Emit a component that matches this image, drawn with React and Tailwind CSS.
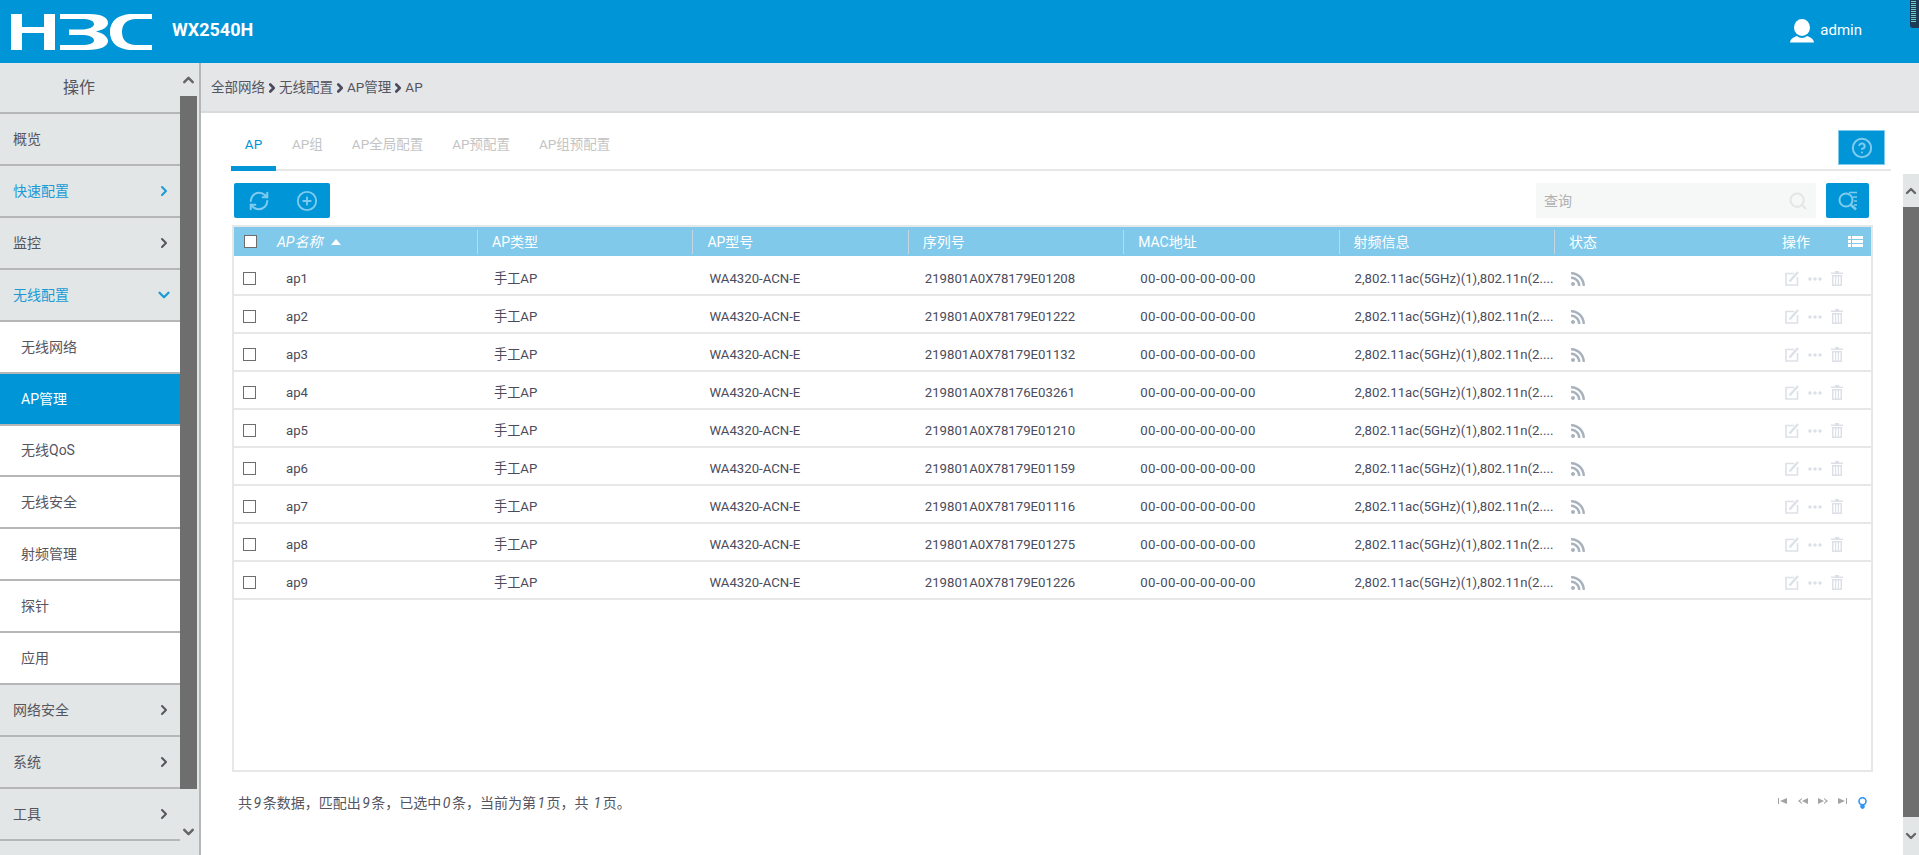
import React from "react";
import {
    ChevronRight,
    ChevronDown,
    ChevronUp,
    RefreshCw,
    CirclePlus,
    CircleHelp,
    Search,
} from "lucide-react";
import { FaRss } from "react-icons/fa";

const font = "font-['Roboto','Noto_Sans_CJK_SC',sans-serif]";

const menu = [
    { label: "概览" },
    { label: "快速配置", arrow: "right", active: true },
    { label: "监控", arrow: "right" },
    { label: "无线配置", arrow: "down", active: true },
    { label: "无线网络", sub: true },
    { label: "AP管理", sub: true, selected: true },
    { label: "无线QoS", sub: true },
    { label: "无线安全", sub: true },
    { label: "射频管理", sub: true },
    { label: "探针", sub: true },
    { label: "应用", sub: true },
    { label: "网络安全", arrow: "right" },
    { label: "系统", arrow: "right" },
    { label: "工具", arrow: "right" },
];

const rows = [
    ["ap1", "219801A0X78179E01208"],
    ["ap2", "219801A0X78179E01222"],
    ["ap3", "219801A0X78179E01132"],
    ["ap4", "219801A0X78176E03261"],
    ["ap5", "219801A0X78179E01210"],
    ["ap6", "219801A0X78179E01159"],
    ["ap7", "219801A0X78179E01116"],
    ["ap8", "219801A0X78179E01275"],
    ["ap9", "219801A0X78179E01226"],
];

const tabs = ["AP", "AP组", "AP全局配置", "AP预配置", "AP组预配置"];
const crumbs = ["全部网络", "无线配置", "AP管理", "AP"];
const columns = ["AP类型", "AP型号", "序列号", "MAC地址", "射频信息"];
const gridCols = "grid-cols-[243px_215.4px_215.4px_215.4px_215.4px_215.4px_1fr]";

function Logo() {
    return (
        <svg width="141" height="36" viewBox="0 0 141 36" fill="#fff">
            <path d="M0 0H11V13H33V0H44V36H33V19H11V36H0Z" />
            <path d="M49 0H78C92 0 97 4 97 9C97 13 92 16 85 17.5C92 19 97 23 97 27C97 32 90 36 76 36H49V31H70C79 31 83 29 83 26.5C83 23 78 21 70 21H58V15.5H70C78 15.5 83 13 83 10C83 7 79 5 70 5H49Z" />
            <path d="M141 0H122C106 0 99 8 99 18C99 28 106 36 122 36H141V31H125C116 31 111 26 111 18C111 10 116 5 125 5H141Z" />
        </svg>
    );
}

function UserIcon() {
    return (
        <svg width="24" height="24" viewBox="0 0 24 24" fill="#fff">
            <ellipse cx="12" cy="8.5" rx="8" ry="8.5" />
            <path d="M0 23.5C0.5 20 3 18.5 7 17C9.5 19.5 14.5 19.5 17 17C21 18.5 23.5 20 24 23.5Z" />
        </svg>
    );
}

function Checkbox() {
    return <div className="h-[13px] w-[13px] border-[1.5px] border-[#6d6d6d] bg-white" />;
}

function SearchListIcon() {
    return (
        <svg width="20" height="20" viewBox="0 0 20 20" fill="none" stroke="#7fcbee" strokeWidth="2">
            <circle cx="8" cy="9" r="6.5" />
            <path d="M12.5 13.5L18 18.5" strokeWidth="2.6" />
            <path d="M11 1.5H19M15 6H19M16 10H19M16 14H19" strokeWidth="1.5" />
        </svg>
    );
}

function EditIcon() {
    return (
        <svg width="14" height="15" viewBox="0 0 14 15" fill="none" stroke="#dde1e7" strokeWidth="1.6">
            <path d="M9 2.5H1V14H12.5V6" />
            <path d="M4.5 10.5L13 1" strokeWidth="2.4" />
        </svg>
    );
}

function TrashIcon() {
    return (
        <svg width="12" height="15" viewBox="0 0 12 15" fill="#dde1e7">
            <path d="M4 0H8V1.5H12V3H0V1.5H4Z" />
            <path d="M1 4H11V15H1ZM2.5 5.5V13.5H4V5.5ZM5.2 5.5V13.5H6.8V5.5ZM8 5.5V13.5H9.5V5.5Z" fillRule="evenodd" />
        </svg>
    );
}

function Dots() {
    return (
        <svg width="14" height="4" viewBox="0 0 14 4" fill="#dde1e7">
            <circle cx="2" cy="2" r="1.8" />
            <circle cx="7" cy="2" r="1.8" />
            <circle cx="12" cy="2" r="1.8" />
        </svg>
    );
}

function ListIcon() {
    return (
        <svg width="15" height="11" viewBox="0 0 15 11" fill="#fff">
            <path d="M0 0H3V3H0ZM4 0H15V3H4ZM0 4H3V7H0ZM4 4H15V7H4ZM0 8H3V11H0ZM4 8H15V11H4Z" />
        </svg>
    );
}

function BulbIcon() {
    return (
        <svg width="9" height="12" viewBox="0 0 9 12" fill="none" stroke="#2f95f5" strokeWidth="1.6">
            <circle cx="4.5" cy="4.2" r="3.5" />
            <path d="M2.8 8.5H6.2V10.5H2.8Z" fill="#2f95f5" strokeWidth="1" />
            <path d="M3.5 11.5H5.5" strokeWidth="1" />
        </svg>
    );
}

function Pager({ d }) {
    return (
        <svg width="10" height="6" viewBox="0 0 10 6" fill="#a3a3a3">
            <path d={d} />
        </svg>
    );
}

function Sidebar() {
    return (
        <aside className="flex w-[201px] shrink-0 border-r-2 border-[#b5b7b7] bg-[#e3e6e6]">
            <div className="w-[180px] shrink-0">
                <div className="flex h-[51px] items-center justify-center border-b-2 border-[#b5b7b7] pr-[22px] text-base text-[#55555f]">
                    <span>操作</span>
                </div>
                {menu.map((item) => (
                    <div
                        key={item.label}
                        className={`flex h-[51.93px] items-center justify-between border-b-2 border-[#b5b7b7] text-sm ${
                            item.sub ? "pl-[21px]" : "pl-[13px]"
                        } ${item.selected ? "bg-[#0095d7] text-white" : item.sub ? "bg-white text-[#55555f]" : ""} ${
                            !item.sub && item.active ? "text-[#1a9ad6]" : !item.sub ? "text-[#55555f]" : ""
                        }`}
                    >
                        <span>{item.label}</span>
                        {item.arrow === "right" && (
                            <ChevronRight size={16} strokeWidth={3} className="mr-[8px]" />
                        )}
                        {item.arrow === "down" && (
                            <ChevronDown size={18} strokeWidth={3} className="mr-[7px]" />
                        )}
                    </div>
                ))}
            </div>
            <div className="flex h-full w-[17px] flex-col">
                <div className="flex h-[33px] items-center justify-center text-[#666]">
                    <ChevronUp size={18} strokeWidth={3.5} />
                </div>
                <div className="h-[693px] bg-[#6e6e6e]" />
                <div className="flex h-[66px] items-start justify-center pt-[34px] text-[#666]">
                    <ChevronDown size={18} strokeWidth={3.5} />
                </div>
            </div>
        </aside>
    );
}

function Table() {
    return (
        <div className="mt-[7px] h-[547px] border-2 border-[#e5e7e8]">
            <div className={`grid h-[29px] items-center bg-[#80c9eb] text-sm text-white ${gridCols}`}>
                <div className="flex items-center pl-[10px]">
                    <Checkbox />
                    <span className="ml-[20px] italic">AP名称</span>
                    <svg width="10" height="6" viewBox="0 0 10 6" fill="#fff" className="ml-[9px]">
                        <path d="M5 0L10 6H0Z" />
                    </svg>
                </div>
                {columns.map((col) => (
                    <div key={col} className="flex h-[24px] items-center border-l border-[#c4d6df] pl-[14px]">
                        {col}
                    </div>
                ))}
                <div className="flex h-[24px] items-center justify-between border-l border-[#c4d6df] pl-[14px] pr-[8px]">
                    <span>状态</span>
                    <span className="flex items-center">
                        <span className="mr-[38px]">操作</span>
                        <ListIcon />
                    </span>
                </div>
            </div>
            <div className="pt-[2px]">
                {rows.map(([name, serial]) => (
                    <div
                        key={name}
                        className={`grid h-[38px] items-center border-b-2 border-[#e5e7e8] pt-[6px] text-[13.2px] text-[#4b4b5c] ${gridCols}`}
                    >
                        <div className="flex items-center pl-[9px]">
                            <Checkbox />
                            <span className="ml-[30px]">{name}</span>
                        </div>
                        <div className="pl-[17px]">手工AP</div>
                        <div className="pl-[17px]">WA4320-ACN-E</div>
                        <div className="pl-[17px]">{serial}</div>
                        <div className="pl-[17px] tracking-[0.5px]">00-00-00-00-00-00</div>
                        <div className="whitespace-nowrap pl-[16px]">2,802.11ac(5GHz)(1),802.11n(2....</div>
                        <div className="flex items-center pl-[16px]">
                            <FaRss size={16} className="text-[#a8b2bd]" />
                            <div className="mb-[1px] ml-[199px] flex items-center gap-[9px]">
                                <EditIcon />
                                <Dots />
                                <TrashIcon />
                            </div>
                        </div>
                    </div>
                ))}
            </div>
        </div>
    );
}

export default function App() {
    return (
        <div className={`relative flex h-screen w-full flex-col overflow-hidden bg-white ${font}`}>
            <header className="flex h-[63px] shrink-0 items-center justify-between bg-[#0095d7] text-white">
                <div className="flex items-center pl-[11px]">
                    <Logo />
                    <span className="mb-[4px] ml-[20px] font-['Roboto'] text-lg font-bold">WX2540H</span>
                </div>
                <div className="mb-[2px] mr-[57px] flex items-center gap-[6px]">
                    <UserIcon />
                    <span className="text-[15px]">admin</span>
                </div>
            </header>
            <div className="absolute right-0 top-0 h-[28px] w-[9px] rounded-bl-[3px] bg-[#1f3b57] pl-[1px] pt-[1px]">
                <div className="h-[22px] w-[5px] bg-[repeating-linear-gradient(#69d3c8_0,#69d3c8_1px,#1f3b57_1px,#1f3b57_2px)]" />
            </div>

            <div className="flex min-h-0 flex-1">
                <Sidebar />
                <main className="flex min-w-0 flex-1 flex-col">
                    <div className="flex h-[50px] shrink-0 items-center border-b-2 border-[#d9dadc] bg-[#e5e6e8] pl-[10px] pt-[1px] text-[13.5px] text-[#55555f]">
                        {crumbs.map((c, i) => (
                            <React.Fragment key={c}>
                                {i > 0 && <ChevronRight size={14} strokeWidth={4.5} className="text-[#4b4b5c]" />}
                                <span>{c}</span>
                            </React.Fragment>
                        ))}
                    </div>

                    <div className="ml-[30px] mr-[28px] flex h-[58px] shrink-0 items-end justify-between border-b-2 border-[#e5e7e8]">
                        <div className="flex">
                            {tabs.map((t, i) => (
                                <div
                                    key={t}
                                    className={`mb-[-2px] flex h-[40px] items-start justify-center pt-[3px] text-[13.5px] ${
                                        i === 0
                                            ? "w-[45px] border-b-[5px] border-[#0095d7] text-[#0095d7]"
                                            : "ml-[29px] text-[#c4c4c4]"
                                    } ${i === 1 ? "!ml-[16px]" : ""}`}
                                >
                                    {t}
                                </div>
                            ))}
                        </div>
                        <div className="mb-[4px] mr-[6px] flex h-[35px] w-[47px] items-center justify-center border border-[#7fcbee] bg-[#0095d7] text-[#7fcbee]">
                            <CircleHelp size={22} strokeWidth={2.2} />
                        </div>
                    </div>

                    <div className="flex min-h-0 flex-1">
                        <div className="min-w-0 flex-1 pl-[31px] pr-[30px] pt-[12px]">
                            <div className="flex items-center justify-between">
                                <div className="ml-[2px] flex h-[35px] w-[96px] items-center rounded-[2px] bg-[#0095d7] pl-[14px] text-[#7fcbee]">
                                    <RefreshCw size={22} strokeWidth={2.2} />
                                    <CirclePlus size={22} strokeWidth={2} className="ml-[26px]" />
                                </div>
                                <div className="mr-[4px] flex items-center">
                                    <div className="flex h-[35px] w-[280px] items-center justify-between bg-[#f6f7f7] pl-[8px] pr-[8px] text-sm text-[#b1b1b1]">
                                        <span>查询</span>
                                        <Search size={20} strokeWidth={2.5} className="text-[#e4e6e6]" />
                                    </div>
                                    <div className="ml-[10px] flex h-[35px] w-[43px] items-center justify-center rounded-[2px] bg-[#0095d7]">
                                        <SearchListIcon />
                                    </div>
                                </div>
                            </div>
                            <Table />
                            <div className="mt-[21px] flex items-center justify-between pl-[6px] pr-[6px] text-sm text-[#55555f]">
                                <span>
                                    共<i className="mx-[1.5px]">9</i>条数据，匹配出<i className="mx-[1.5px]">9</i>条，已选中
                                    <i className="mx-[1.5px]">0</i>条，当前为第<i className="mx-[1.5px]">1</i>页，共{" "}
                                    <i className="mx-[1.5px]">1</i>页。
                                </span>
                                <div className="flex items-center gap-[10px]">
                                    <div className="mb-[5px] flex items-center gap-[10px]">
                                        <Pager d="M0 0H1V6H0ZM2 3L9 0V6Z" />
                                        <Pager d="M0 3L4 0V1L2 3L4 5V6ZM4 3L10 0V6Z" />
                                        <Pager d="M0 0L6 3L0 6ZM6 0L10 3L6 6V5L8 3L6 1Z" />
                                        <Pager d="M0 0L7 3L0 6ZM8 0H9V6H8Z" />
                                    </div>
                                    <BulbIcon />
                                </div>
                            </div>
                        </div>
                        <div className="mt-[3px] flex w-[16px] shrink-0 flex-col bg-[#e3e6e6] text-[#666]">
                            <div className="flex h-[33px] items-center justify-center">
                                <ChevronUp size={16} strokeWidth={3.5} />
                            </div>
                            <div className="h-[610px] bg-[#6e6e6e]" />
                            <div className="flex flex-1 items-center justify-center">
                                <ChevronDown size={16} strokeWidth={3.5} />
                            </div>
                        </div>
                    </div>
                </main>
            </div>
        </div>
    );
}
